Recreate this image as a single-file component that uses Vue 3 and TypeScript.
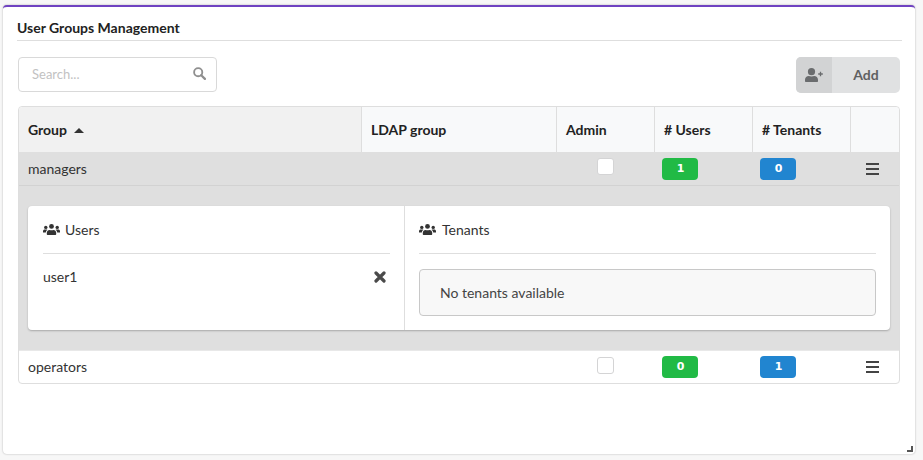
<script setup lang="ts">
interface Group { name: string; users: number; tenants: number; open: boolean }
const groups: Group[] = [
  { name: 'managers', users: 1, tenants: 0, open: true },
  { name: 'operators', users: 0, tenants: 1, open: false },
]
</script>

<template>
  <div class="page">
    <section class="card">
      <h2 class="title">User Groups Management</h2>
      <div class="toolbar">
        <label class="search">
          <input type="text" placeholder="Search..." />
          <svg class="search-icon" viewBox="0 0 14 14" width="13" height="13">
            <circle cx="5.600" cy="5.600" r="4.400" fill="none" stroke="#8f8f8f" stroke-width="2" />
            <path d="M8.900 8.900 12.800 12.800" stroke="#8f8f8f" stroke-width="2.400" stroke-linecap="round" />
          </svg>
        </label>
        <button class="add" type="button">
          <span class="add-icon">
            <svg viewBox="0 0 18 14" width="18" height="14">
              <circle cx="6.500" cy="3.700" r="3.600" fill="#6a6c6e" />
              <path d="M0 13.200v-1.500C0 9.300 1.700 7.900 3.800 7.900c.8.300 1.700.5 2.700.5s1.900-.2 2.700-.5c2.100 0 3.800 1.400 3.800 3.800v1.500c0 .4-.3.700-.7.700H.7c-.4 0-.7-.3-.7-.7z" fill="#6a6c6e" />
              <path d="M13.200 6h4.600M15.500 3.700v4.600" stroke="#6a6c6e" stroke-width="1.300" />
            </svg>
          </span>
          <span class="add-label">Add</span>
        </button>
      </div>

      <table class="groups">
        <colgroup>
          <col class="c1" /><col class="c2" /><col class="c3" /><col class="c4" /><col class="c5" /><col class="c6" />
        </colgroup>
        <thead>
          <tr>
            <th class="sorted">Group <span class="caret"></span></th>
            <th>LDAP group</th>
            <th>Admin</th>
            <th># Users</th>
            <th># Tenants</th>
            <th></th>
          </tr>
        </thead>
        <tbody>
          <template v-for="g in groups" :key="g.name">
            <tr class="row" :class="{ active: g.open }">
              <td>{{ g.name }}</td>
              <td></td>
              <td><span class="check"></span></td>
              <td><span class="badge green">{{ g.users }}</span></td>
              <td><span class="badge blue">{{ g.tenants }}</span></td>
              <td class="menu-cell">
                <span class="menu"><i></i><i></i><i></i></span>
              </td>
            </tr>
            <tr v-if="g.open" class="details">
              <td colspan="6">
                <div class="panel">
                  <div class="side users">
                    <div class="side-head">
                      <svg viewBox="0 0 17 11" width="17" height="11" fill="#333">
                        <circle cx="2.800" cy="3.400" r="1.700" />
                        <circle cx="14.200" cy="3.400" r="1.700" />
                        <circle cx="8.500" cy="2.400" r="2.400" />
                        <path d="M0 8.600V7.200C0 6.100.8 5.500 1.800 5.500h1.600c.3 0 .6.100.9.300-.9.700-1.400 1.600-1.500 2.800zM17 8.600V7.200c0-1.100-.8-1.700-1.800-1.700h-1.600c-.3 0-.6.100-.9.300.9.700 1.400 1.600 1.500 2.800z" />
                        <path d="M3.800 10.300V8.900c0-1.800 1.200-3 2.700-3 .6.300 1.300.4 2 .4s1.400-.1 2-.4c1.500 0 2.700 1.200 2.700 3v1.400c0 .4-.3.700-.7.700h-8c-.4 0-.7-.3-.7-.7z" />
                      </svg>
                      <span>Users</span>
                    </div>
                    <div class="user-row">
                      <span>user1</span>
                      <svg viewBox="0 0 12 12" width="12" height="12">
                        <path d="M2 2l8 8M10 2l-8 8" stroke="#4a4a4a" stroke-width="3.200" stroke-linecap="round" />
                      </svg>
                    </div>
                  </div>
                  <div class="side tenants">
                    <div class="side-head">
                      <svg viewBox="0 0 17 11" width="17" height="11" fill="#333">
                        <circle cx="2.800" cy="3.400" r="1.700" />
                        <circle cx="14.200" cy="3.400" r="1.700" />
                        <circle cx="8.500" cy="2.400" r="2.400" />
                        <path d="M0 8.600V7.200C0 6.100.8 5.500 1.800 5.500h1.600c.3 0 .6.100.9.300-.9.700-1.400 1.600-1.500 2.800zM17 8.600V7.200c0-1.100-.8-1.700-1.800-1.700h-1.600c-.3 0-.6.100-.9.300.9.700 1.400 1.600 1.500 2.800z" />
                        <path d="M3.800 10.300V8.900c0-1.800 1.200-3 2.700-3 .6.300 1.300.4 2 .4s1.400-.1 2-.4c1.500 0 2.700 1.200 2.700 3v1.400c0 .4-.3.700-.7.700h-8c-.4 0-.7-.3-.7-.7z" />
                      </svg>
                      <span>Tenants</span>
                    </div>
                    <div class="empty">No tenants available</div>
                  </div>
                </div>
              </td>
            </tr>
          </template>
        </tbody>
      </table>
      <span class="grip"></span>
    </section>
  </div>
</template>

<style>
html, body { margin: 0; background: #f7f7f7; }
</style>

<style scoped>
.page {
  width: 923px;
  height: 460px;
  padding: 5px 8px 0 3px;
  box-sizing: border-box;
  font-family: Lato, "Open Sans", sans-serif;
  color: #333;
  overflow: hidden;
}
.card {
  position: relative;
  height: 449px;
  box-sizing: border-box;
  background: #fff;
  border-top: 2px solid #6f42c1;
  border-radius: 4px;
  box-shadow: 0 0 2px rgba(0, 0, 0, 0.3);
  padding: 0 13px 0 14px;
}
.title {
  margin: 0;
  height: 34px;
  box-sizing: border-box;
  padding: 12px 0 0;
  border-bottom: 1px solid #dedede;
  font-size: 14px;
  line-height: 18px;
  font-weight: 700;
  color: #222;
}
.toolbar {
  display: flex;
  justify-content: space-between;
  align-items: flex-start;
  margin: 16px 2px 13px 1px;
}
.search {
  position: relative;
  display: block;
  width: 199px;
  height: 35px;
}
.search input {
  width: 100%;
  height: 100%;
  box-sizing: border-box;
  padding: 0 13px 2px;
  border: 1px solid #d9d9d9;
  border-radius: 4px;
  font: 13px Lato, sans-serif;
  outline: none;
}
.search input::placeholder { color: #c2c2c2; opacity: 1; }
.search-icon { position: absolute; right: 11px; top: 10px; }
.add {
  display: flex;
  width: 104px;
  height: 36px;
  padding: 0;
  border: 0;
  border-radius: 5px;
  overflow: hidden;
  background: #e0e1e2;
  color: #5f6061;
  font: 700 14px Lato, sans-serif;
}
.add-icon {
  width: 36px;
  height: 100%;
  background: #d2d3d4;
  display: flex;
  align-items: center;
  justify-content: center;
}
.add-label { flex: 1; line-height: 36px; text-align: center; }
.groups {
  width: 882px;
  margin-left: 1px;
  table-layout: fixed;
  border-collapse: separate;
  border-spacing: 0;
  border: 1px solid #dedede;
  border-radius: 4px;
  font-size: 14px;
}
.c1 { width: 342px; }
.c2 { width: 195px; }
.c3 { width: 98px; }
.c4 { width: 98px; }
.c5 { width: 98px; }
.c6 { width: 49px; }
th {
  height: 45px;
  padding: 0 9px;
  background: #f8f9fa;
  border-left: 1px solid #dedede;
  text-align: left;
  font-weight: 700;
  color: #222;
  font-size: 14px;
  box-sizing: border-box;
}
th:first-child { border-left: 0; border-top-left-radius: 4px; }
th:last-child { border-top-right-radius: 4px; }
th.sorted { background: #f1f1f1; }
.caret {
  display: inline-block;
  margin-left: 4px;
  vertical-align: 2px;
  border-left: 5px solid transparent;
  border-right: 5px solid transparent;
  border-bottom: 5px solid #333;
}
.row td {
  height: 32px;
  padding: 0 9px;
  box-sizing: border-box;
  line-height: 1;
  color: #333;
}
.row.active td {
  height: 34px;
  background: #dfdfdf;
  border-bottom: 1px solid #d2d2d2;
}
.row:last-child td:first-child { border-bottom-left-radius: 4px; }
.row:last-child td:last-child { border-bottom-right-radius: 4px; }
.check {
  display: block;
  width: 15px;
  height: 15px;
  margin: -4px 0 0 32px;
  background: #fff;
  border: 1px solid #d4d4d5;
  border-radius: 3px;
}
.badge {
  display: block;
  width: 36px;
  height: 22px;
  margin-left: -1px;
  padding-left: 1px;
  box-sizing: border-box;
  border-radius: 4px;
  color: #fff;
  font: 700 11px/22px "DejaVu Sans", sans-serif;
  text-align: center;
}
.green { background: #21ba45; }
.blue { background: #2185d0; }
.menu-cell { padding-left: 16px !important; }
.menu { display: flex; flex-direction: column; gap: 3px; width: 13px; }
.menu i { display: block; height: 2px; background: #444; }
.details td {
  height: 165px;
  box-sizing: border-box;
  padding: 20px 9px;
  background: #dfdfdf;
  border-bottom: 1px solid #e8e8e8;
}
.panel {
  display: flex;
  height: 124px;
  background: #fff;
  border-radius: 4px;
  box-shadow: 0 1px 2px rgba(0, 0, 0, 0.25);
}
.side { box-sizing: border-box; padding: 0 14px 0 15px; }
.users { width: 377px; border-right: 1px solid #dedede; }
.tenants { flex: 1; padding-left: 14px; }
.side-head {
  display: flex;
  align-items: center;
  gap: 5px;
  height: 47px;
  border-bottom: 1px solid #dedede;
  font-size: 14px;
  color: #333;
}
.tenants .side-head { gap: 6px; }
.user-row {
  display: flex;
  justify-content: space-between;
  align-items: center;
  margin-top: 14px;
  height: 17px;
  padding-right: 4px;
  color: #333;
}
.empty {
  margin-top: 15px;
  height: 47px;
  box-sizing: border-box;
  padding: 0 20px;
  line-height: 45px;
  background: #f8f8f8;
  border: 1px solid #c8c8c8;
  border-radius: 4px;
  color: #444;
}
.grip {
  position: absolute;
  right: 2px;
  bottom: 2px;
  width: 4px;
  height: 4px;
  border-right: 2px solid #555;
  border-bottom: 2px solid #555;
}
</style>
